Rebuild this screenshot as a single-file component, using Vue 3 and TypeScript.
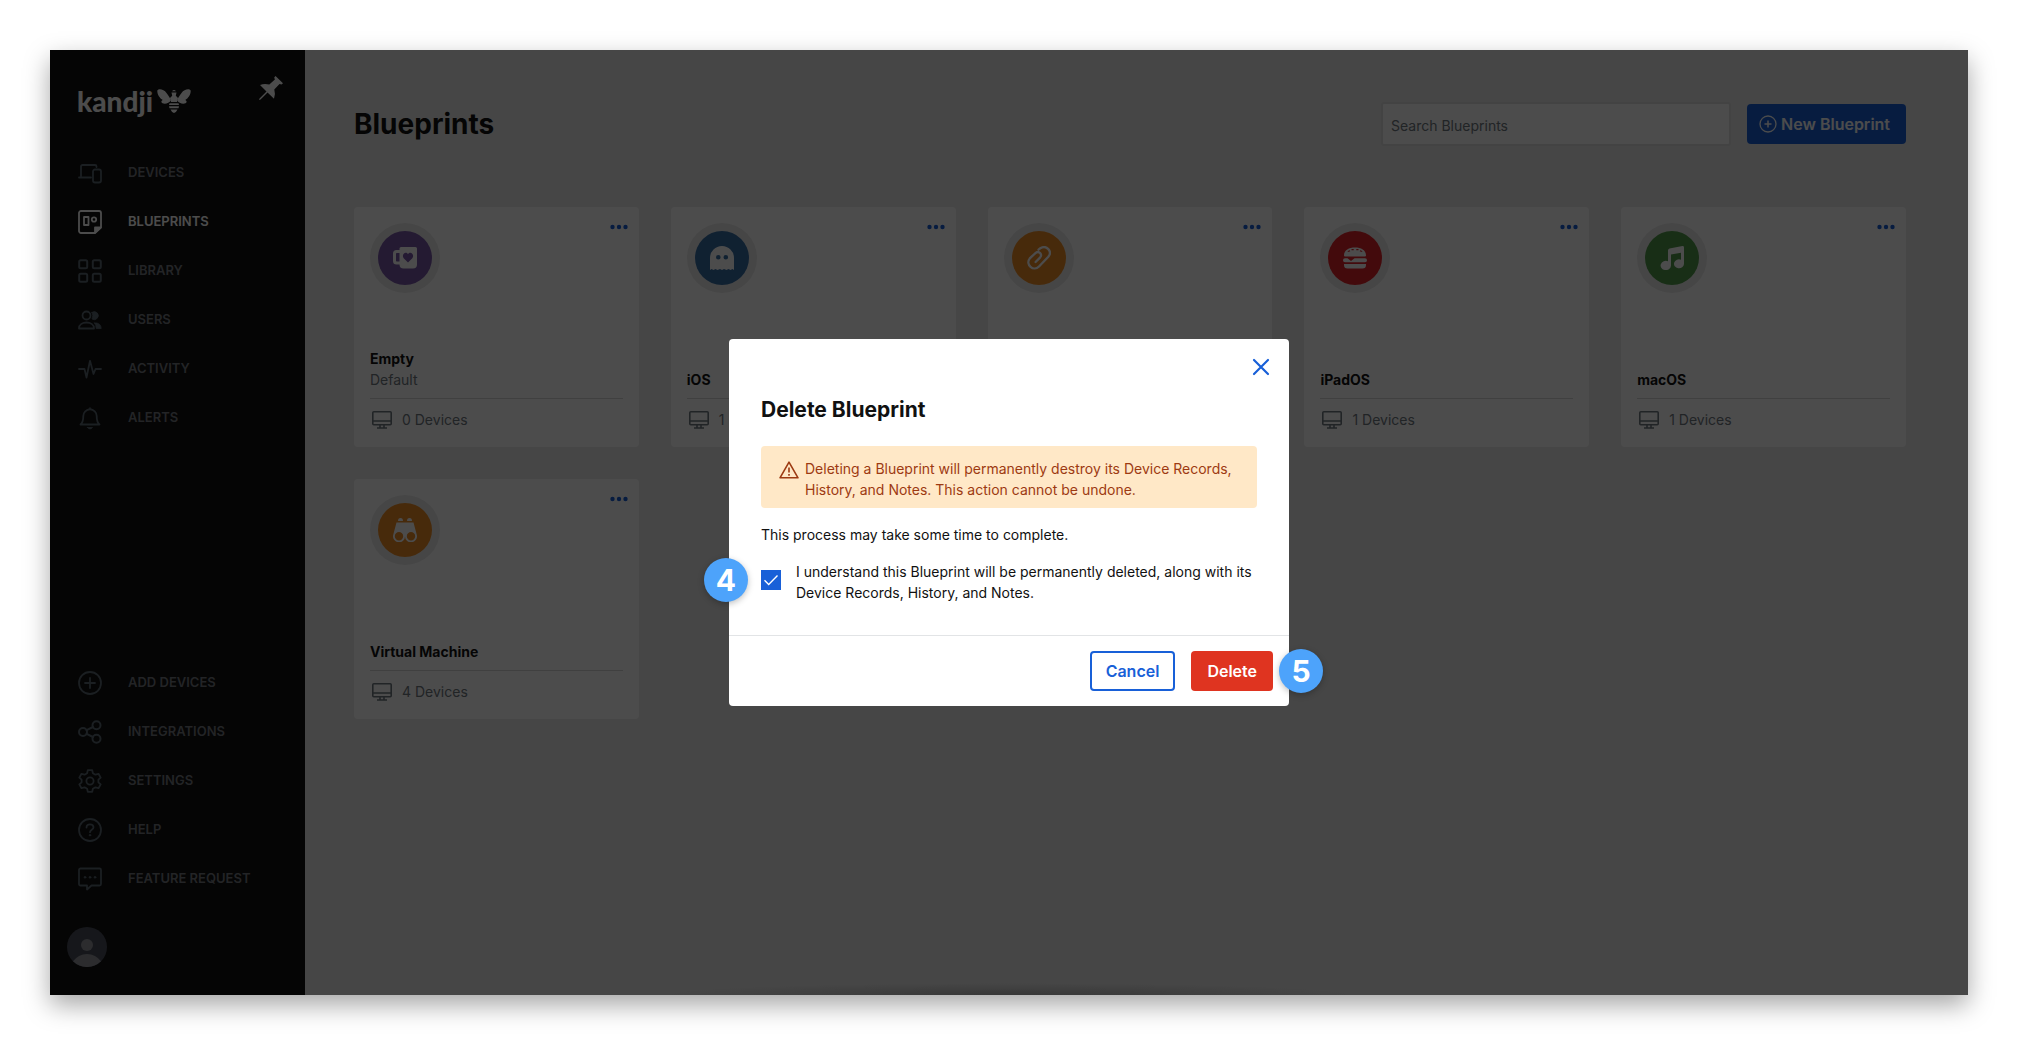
<script setup lang="ts">
import { ref } from 'vue'

interface NavItem {
  label: string
  icon: string
  active?: boolean
}

interface Blueprint {
  name: string
  note?: string
  devices: number
  color: string
  icon: string
}

const primaryNav: NavItem[] = [
  {
    label: 'Devices',
    icon: '<path d="M3 15V5.5A1.5 1.5 0 0 1 4.500 4H17a1.500 1.500 0 0 1 1.500 1.500V6M1 16.500H13"/><rect x="15" y="8.500" width="8" height="13" rx="2"/>',
  },
  {
    label: 'Blueprints',
    active: true,
    icon: '<path d="M17 23H3a2 2 0 0 1-2-2V3a2 2 0 0 1 2-2H21a2 2 0 0 1 2 2V17.500Z"/><path d="M17 22.500V17.500H22.500Z" fill="currentColor"/><rect x="6" y="7" width="4.500" height="8"/><circle cx="16" cy="9.500" r="2.200"/>',
  },
  {
    label: 'Library',
    icon: '<g stroke-width="2"><rect x="1.200" y="1.200" width="8" height="8" rx="1.500"/><rect x="14.800" y="1.200" width="8" height="8" rx="1.500"/><rect x="1.200" y="14.800" width="8" height="8" rx="1.500"/><rect x="14.800" y="14.800" width="8" height="8" rx="1.500"/></g>',
  },
  {
    label: 'Users',
    icon: '<circle cx="8.500" cy="7.500" r="4"/><path d="M1 20.500C1 12.500 16 12.500 16 20.500Z"/><path d="M14 4.300a4 4 0 1 1 0 6.600Q15.500 7.500 14 4.300ZM16.500 15C21 14.500 23 17 23.200 20.500H18.200Q18.300 17 16.500 15Z" fill="currentColor" stroke-width=".8"/>',
  },
  {
    label: 'Activity',
    icon: '<path d="M1 12H6.500L8.500 20.500 12 3.800 15.500 17 17.500 12H23"/>',
  },
  {
    label: 'Alerts',
    icon: '<path d="M2.500 18.500C5 16.500 5.300 14 5.300 10A6.700 6.700 0 0 1 18.700 10C18.700 14 19 16.500 21.500 18.500Z"/><path d="M9.500 21.500H14.500Q12 24.500 9.500 21.500ZM11 2.500Q12 .3 13 2.500Z" fill="currentColor" stroke-width=".8"/>',
  },
]

const secondaryNav: NavItem[] = [
  {
    label: 'Add Devices',
    icon: '<circle cx="12" cy="12" r="11"/><path d="M12 7V17M7 12H17"/>',
  },
  {
    label: 'Integrations',
    icon: '<g stroke-width="2"><circle cx="5" cy="12" r="4"/><circle cx="18.500" cy="5.200" r="4"/><circle cx="18.500" cy="18.800" r="4"/><path d="M8.600 10.200 15 7M8.600 13.800 15 17"/></g>',
  },
  {
    label: 'Settings',
    icon: '<circle cx="12" cy="12" r="3.600"/><path d="M9.800 1.200H14.200L14.900 4.300 17.400 5.700 20.500 4.800 22.700 8.600 20.400 10.700V13.300L22.700 15.400 20.500 19.200 17.400 18.300 14.900 19.700 14.200 22.800H9.800L9.100 19.700 6.600 18.300 3.500 19.200 1.300 15.400 3.600 13.300V10.700L1.300 8.600 3.500 4.800 6.600 5.700 9.100 4.300Z"/>',
  },
  {
    label: 'Help',
    icon: '<circle cx="12" cy="12" r="11"/><path d="M8.500 9.500C8.500 5 15.500 5.500 15.500 9.300 15.500 11.800 12 11.600 12 14.200"/><circle cx="12" cy="17.200" r=".8" fill="currentColor" stroke-width=".8"/>',
  },
  {
    label: 'Feature Request',
    icon: '<path d="M2.500 1.500H21.500A1.500 1.500 0 0 1 23 3V17A1.500 1.500 0 0 1 21.500 18.500H13.500L9 22.500V18.500H2.500A1.500 1.500 0 0 1 1 17V3A1.500 1.500 0 0 1 2.500 1.500Z"/><g fill="currentColor" stroke-width=".8"><circle cx="7" cy="10.300" r=".9"/><circle cx="12" cy="10.300" r=".9"/><circle cx="17" cy="10.300" r=".9"/></g>',
  },
]

const blueprints: Blueprint[] = [
  {
    name: 'Empty',
    note: 'Default',
    devices: 0,
    color: '#7957a8',
    icon: '<path fill-rule="evenodd" d="M6.500 2.500A1.500 1.500 0 0 1 8 1H22.500A1.500 1.500 0 0 1 24 2.500V18.500A4 4 0 0 1 20 22.500H10.500A4 4 0 0 1 6.500 18.500H3.500A3.500 3.500 0 0 1 0 15V7.500A3.500 3.500 0 0 1 3.500 4H6.500ZM6.500 7H3.800A.8.800 0 0 0 3 7.800V14.700A.8.800 0 0 0 3.800 15.500H6.500ZM15 16.500 19.300 12.200C22 9 17.500 4.500 15 8.200 12.500 4.500 8 9 10.700 12.200Z"/>',
  },
  {
    name: 'iOS',
    devices: 1,
    color: '#376ea6',
    icon: '<path fill-rule="evenodd" d="M0 24V12A12 12 0 0 1 24 12V24L22.500 23 20.500 24 18.500 23 16.500 24 14 23 12 24 10 23 7.500 24 5.500 23 3.500 24 1.500 23ZM8.300 9A2.300 2.300 0 1 0 8.300 13.600 2.300 2.300 0 0 0 8.300 9ZM15.800 9A2.300 2.300 0 1 0 15.800 13.600 2.300 2.300 0 0 0 15.800 9Z"/>',
  },
  {
    name: 'tvOS',
    devices: 1,
    color: '#ef8d26',
    icon: '<path fill="none" stroke="#fff" stroke-width="2.300" stroke-linecap="round" d="M11.500 3.700 13.300 2.300C19.500-1.500 25.800 5.500 21.300 10.800L12 20.500C6.500 26 -2 18.500 2.800 12.400L8.700 6.800C12 4.300 15.800 8.500 13 11.600L8.600 16"/>',
  },
  {
    name: 'iPadOS',
    devices: 1,
    color: '#e12228',
    icon: '<path fill-rule="evenodd" d="M1 9.500C1 4 6 1.500 12 1.500S23 4 23 9.500Q23 10.500 22 10.500H2Q1 10.500 1 9.500ZM4.800 6 7.300 5.200 6.800 4.200 4.800 5ZM8.500 4.200H10.700V3.100H8.500ZM13.300 4.200H15.500V3.100H13.300ZM16.700 5.200 19.200 6V5L17.200 4.200Z"/><path d="M2 12.200H4.500L8 15 11.500 12.200H22A2 2 0 0 1 22 16.200H2A2 2 0 0 1 2 12.200ZM1 18H23V19A3.500 3.500 0 0 1 19.500 22.500H4.500A3.500 3.500 0 0 1 1 19Z"/>',
  },
  {
    name: 'macOS',
    devices: 1,
    color: '#519a4b',
    icon: '<path d="M8 4.500Q8 3 9.500 2.600L22.500 .1Q24 0 24 1.500V18A5 4.500 0 1 1 21 13.700V6.800L11 8.600V19.500A5.200 4.600 0 1 1 8 15.300Z"/>',
  },
  {
    name: 'Virtual Machine',
    devices: 4,
    color: '#ef8d26',
    icon: '<path d="M5 3A2.500 3 0 0 1 10 3ZM14 3A2.500 3 0 0 1 19 3Z"/><path fill-rule="evenodd" d="M3.500 4.500H20.500L23.700 16.500A6 6 0 1 1 12 18 6 6 0 1 1 .3 16.500ZM6 14A4.200 4.200 0 1 0 6 22.400 4.200 4.200 0 0 0 6 14ZM18 14A4.200 4.200 0 1 0 18 22.400 4.200 4.200 0 0 0 18 14Z"/>',
  },
]

const query = ref('')
const understood = ref(true)
</script>

<template>
  <div class="stage">
    <div class="window">
      <aside class="sidebar">
        <div class="brand">
          <a class="logo" href="#" aria-label="kandji home">
            <span>kandji</span>
            <svg width="34" height="24" viewBox="0 0 34 24" fill="currentColor" aria-hidden="true">
              <path d="M.3 1.500C2-.8 7 .5 9.500 4 11.500 7 13.500 9 13.800 11.500 12.500 14 8 15.500 5.500 14.200 3.500 13.200 4.500 11.500 5.800 11 2.500 9.500 0 5 .3 1.500ZM33.700 1.500C32-.8 27 .5 24.500 4 22.500 7 20.500 9 20.200 11.500 21.500 14 26 15.500 28.500 14.200 30.500 13.200 29.500 11.500 28.200 11 31.500 9.500 34 5 33.700 1.500Z" />
              <path d="M15 2.200Q17-.2 19 2.200ZM14.500 3.500H19.500L18.800 6.800 21 9 20 13H14L13 9 15.200 6.800ZM12.500 14.200H21.500L22 16H12ZM12 17.300H22L21.500 19.300H12.500ZM13.500 20.600H20.500Q19 24 17 24 15 24 13.500 20.600Z" />
            </svg>
          </a>
          <button class="pin" type="button" aria-label="Pin sidebar">
            <svg width="24" height="24" viewBox="0 0 24 24" fill="currentColor" aria-hidden="true">
              <path d="M16.500 0 24 7.300 22.500 8.600 20.500 8 15.300 13.500Q16.800 18.500 15 22.800L8.500 16.500 1.500 23.500 0 24 .5 22.500 7.500 15.500 1 9Q5.500 7.200 10.300 8.600L15.900 3.500 15.200 1.500Z" />
            </svg>
          </button>
        </div>
        <nav class="nav" aria-label="Main">
          <a v-for="item in primaryNav" :key="item.label" href="#" :class="{ active: item.active }">
            <svg class="nav-icon" width="24" height="24" viewBox="0 0 24 24" aria-hidden="true" v-html="item.icon" />
            <span>{{ item.label }}</span>
          </a>
        </nav>
        <nav class="nav secondary" aria-label="Support">
          <a v-for="item in secondaryNav" :key="item.label" href="#">
            <svg class="nav-icon" width="24" height="24" viewBox="0 0 24 24" aria-hidden="true" v-html="item.icon" />
            <span>{{ item.label }}</span>
          </a>
        </nav>
        <button class="avatar" type="button" aria-label="Account">
          <svg width="40" height="40" viewBox="0 0 40 40" aria-hidden="true">
            <circle cx="20" cy="20" r="20" fill="#4b4f5c" />
            <circle cx="20" cy="18" r="6" fill="#93949b" />
            <path d="M6 34.300A17 17 0 0 1 34 34.300 20 20 0 0 1 6 34.300Z" fill="#93949b" />
          </svg>
        </button>
      </aside>

      <main class="main">
        <header class="header">
          <h1>Blueprints</h1>
          <input v-model="query" class="search" type="search" placeholder="Search Blueprints" aria-label="Search Blueprints" />
          <button class="new" type="button">
            <svg width="18" height="18" viewBox="0 0 18 18" fill="none" stroke="currentColor" stroke-width="1.300" aria-hidden="true">
              <circle cx="9" cy="9" r="8" />
              <path d="M9 5.500V12.500M5.500 9H12.500" stroke-width="1.500" />
            </svg>
            New Blueprint
          </button>
        </header>

        <section class="grid">
          <article v-for="bp in blueprints" :key="bp.name" class="card">
            <div class="card-top">
              <span class="ring">
                <span class="disc" :style="{ background: bp.color }">
                  <svg width="24" height="24" viewBox="0 0 24 24" fill="#fff" aria-hidden="true" v-html="bp.icon" />
                </span>
              </span>
              <button class="more" type="button" :aria-label="`More actions for ${bp.name}`">
                <svg width="18" height="8" viewBox="0 0 18 8" fill="currentColor" aria-hidden="true">
                  <circle cx="2.500" cy="4" r="2.200" />
                  <circle cx="9" cy="4" r="2.200" />
                  <circle cx="15.500" cy="4" r="2.200" />
                </svg>
              </button>
            </div>
            <h2>{{ bp.name }}</h2>
            <p v-if="bp.note" class="note">{{ bp.note }}</p>
            <div class="devices">
              <svg width="20" height="18" viewBox="0 0 20 18" fill="none" stroke="currentColor" stroke-width="1.600" aria-hidden="true">
                <rect x=".8" y=".8" width="18.400" height="13" rx="1" />
                <path d="M1 10H19M8 14V17M12 14V17M5 17H15" />
              </svg>
              <span>{{ bp.devices }} Devices</span>
            </div>
          </article>
        </section>
      </main>

      <div class="overlay">
        <section class="modal" role="dialog" aria-modal="true" aria-labelledby="modal-title">
          <div class="modal-body">
            <button class="close" type="button" aria-label="Close">
              <svg width="18" height="18" viewBox="0 0 18 18" fill="none" stroke="currentColor" stroke-width="2.200" stroke-linecap="round" aria-hidden="true">
                <path d="M2 2 16 16M16 2 2 16" />
              </svg>
            </button>
            <h2 id="modal-title">Delete Blueprint</h2>
            <div class="warning" role="alert">
              <svg width="20" height="18" viewBox="0 0 20 18" fill="none" stroke="currentColor" stroke-width="1.600" stroke-linejoin="round" aria-hidden="true">
                <path d="M10 1.200 19 16.800H1Z" />
                <path d="M10 6.500V11.500M10 13V14.700" />
              </svg>
              <p>Deleting a Blueprint will permanently destroy its Device Records, History, and Notes. This action cannot be undone.</p>
            </div>
            <p class="info">This process may take some time to complete.</p>
            <div class="confirm">
              <span class="check">
                <input id="understood" v-model="understood" type="checkbox" />
                <svg v-if="understood" width="20" height="20" viewBox="0 0 20 20" fill="none" stroke="#fff" stroke-width="1.400" aria-hidden="true">
                  <path d="M3.500 10.300 7.700 14.400 16.500 5.600" />
                </svg>
                <span class="step step-left">4</span>
              </span>
              <label for="understood">I understand this Blueprint will be permanently deleted, along with its Device Records, History, and Notes.</label>
            </div>
          </div>
          <footer class="modal-footer">
            <button class="btn cancel" type="button">Cancel</button>
            <button class="btn delete" type="button">Delete</button>
            <span class="step step-right">5</span>
          </footer>
        </section>
      </div>
    </div>
  </div>
</template>

<style>
body {
  margin: 0;
  background: #fff;
}
</style>

<style scoped>
* {
  box-sizing: border-box;
}

.stage {
  padding: 50px;
  font-family: Inter, "Liberation Sans", sans-serif;
  font-size: 14px;
  line-height: 21px;
  color: #111;
}

.window {
  position: relative;
  display: flex;
  min-height: calc(100vh - 100px);
  background: #ebebeb;
  box-shadow: 0 10px 24px rgba(0, 0, 0, 0.35);
}

button {
  padding: 0;
  border: 0;
  background: none;
  font: inherit;
  cursor: pointer;
}

svg {
  display: block;
  flex: none;
}

h1,
h2,
p {
  margin: 0;
}

.sidebar {
  display: flex;
  flex-direction: column;
  flex: none;
  width: 255px;
  padding: 26px 0 28px;
  background: #111;
}

.brand {
  display: flex;
  justify-content: space-between;
  align-items: flex-start;
  height: 72px;
  padding: 0 22px 0 27px;
  color: #fff;
}

.logo {
  display: flex;
  align-items: center;
  gap: 4px;
  height: 50px;
  color: #fff;
  font-family: Lato, sans-serif;
  font-size: 28px;
  font-weight: 900;
  line-height: 50px;
  text-decoration: none;
}

.pin {
  color: #fff;
}

.nav a {
  display: flex;
  align-items: center;
  gap: 26px;
  height: 49px;
  padding-left: 28px;
  color: #757b80;
  font-size: 13px;
  font-weight: 600;
  text-transform: uppercase;
  text-decoration: none;
}

.nav-icon {
  fill: none;
  stroke: currentColor;
  stroke-width: 1.8;
  stroke-linecap: round;
  stroke-linejoin: round;
  color: #5b6872;
}

.nav .active,
.active .nav-icon {
  color: #fff;
}

.secondary {
  margin-top: auto;
  margin-bottom: 24px;
}

.avatar {
  align-self: flex-start;
  margin-left: 17px;
}

.main {
  flex: 1;
  min-width: 0;
  padding: 52px 62px 53px 49px;
}

.header {
  display: flex;
  align-items: center;
  margin-bottom: 61px;
}

h1 {
  margin-right: auto;
  font-size: 28px;
  font-weight: 700;
  line-height: 36px;
}

.search {
  width: 350px;
  height: 44px;
  margin-right: 16px;
  padding: 2px 8px 0;
  border: 2px solid #e0e0e0;
  border-radius: 3px;
  background: #fff;
  color: #111;
  font: inherit;
}

.search::placeholder {
  color: #6f7880;
  opacity: 1;
}

.new {
  display: flex;
  align-items: center;
  gap: 4px;
  height: 40px;
  padding: 0 16px 0 12px;
  border-radius: 4px;
  background: #1860d8;
  color: #fff;
  font-size: 16px;
  font-weight: 600;
}

.grid {
  display: grid;
  grid-template-columns: repeat(5, minmax(0, 1fr));
  gap: 32px;
}

.card {
  display: flex;
  flex-direction: column;
  height: 240px;
  padding: 16px;
  border-radius: 4px;
  background: #fff;
}

.card-top {
  display: flex;
  justify-content: space-between;
  align-items: flex-start;
  margin-bottom: auto;
}

.ring {
  display: grid;
  place-items: center;
  width: 70px;
  height: 70px;
  border-radius: 50%;
  background: #ebebeb;
}

.disc {
  display: grid;
  place-items: center;
  width: 54px;
  height: 54px;
  border-radius: 50%;
}

.more {
  margin-right: -5px;
  color: #1860d8;
}

.card h2 {
  font-size: 14px;
  font-weight: 700;
  line-height: 21px;
}

.note,
.devices {
  color: #6f7880;
}

.devices {
  display: flex;
  align-items: center;
  gap: 10px;
  margin-top: 8px;
  padding: 10px 2px 0;
  border-top: 1px solid #d8d8d8;
  line-height: 22px;
}

.overlay {
  position: absolute;
  inset: 0;
  display: grid;
  place-items: center;
  background:
    radial-gradient(350px 12px at 50% 100%, rgba(0, 0, 0, 0.2), transparent),
    rgba(0, 0, 0, 0.7);
}

.modal {
  width: 560px;
  border-radius: 4px;
  background: #fff;
}

.modal-body {
  display: flex;
  flex-direction: column;
  padding: 19px 32px 32px;
}

.close {
  align-self: flex-end;
  margin-right: -13px;
  color: #1860d8;
}

.modal h2 {
  margin-top: 20px;
  font-size: 21px;
  font-weight: 700;
  line-height: 28px;
}

.warning {
  display: flex;
  gap: 6px;
  margin-top: 22px;
  padding: 12px 18px 8px;
  border-radius: 4px;
  background: #ffe8c7;
  color: #9d3a12;
}

.warning svg {
  margin-top: 3px;
}

.info {
  margin-top: 16px;
}

.confirm {
  display: flex;
  align-items: flex-start;
  gap: 15px;
  margin-top: 16px;
}

.check {
  position: relative;
  display: grid;
  flex: none;
  margin-top: 9px;
}

.check > input,
.check > svg {
  grid-area: 1 / 1;
}

.check > svg {
  z-index: 1;
  pointer-events: none;
}

.check input {
  appearance: none;
  width: 20px;
  height: 20px;
  margin: 0;
  border: 1px solid #1860d8;
  background: #fff;
}

.check input:checked {
  background: #1860d8;
}

.modal-footer {
  position: relative;
  display: flex;
  justify-content: flex-end;
  gap: 16px;
  padding: 15px 16px;
  border-top: 1px solid #e2e4e6;
}

.btn {
  height: 40px;
  padding: 0 14px;
  border: 2px solid transparent;
  border-radius: 4px;
  font-size: 16px;
  font-weight: 600;
}

.cancel {
  border-color: #1860d8;
  color: #1860d8;
}

.delete {
  background: #df3420;
  color: #fff;
}

.step {
  position: absolute;
  top: 50%;
  display: grid;
  place-items: center;
  width: 44px;
  height: 44px;
  margin-top: -22px;
  border-radius: 50%;
  background: #4da3fb;
  box-shadow: 0 2px 6px rgba(0, 0, 0, 0.25);
  color: #fff;
  font-size: 30px;
  font-weight: 700;
}

.step-left {
  left: -57px;
}

.step-right {
  right: -34px;
}
</style>
